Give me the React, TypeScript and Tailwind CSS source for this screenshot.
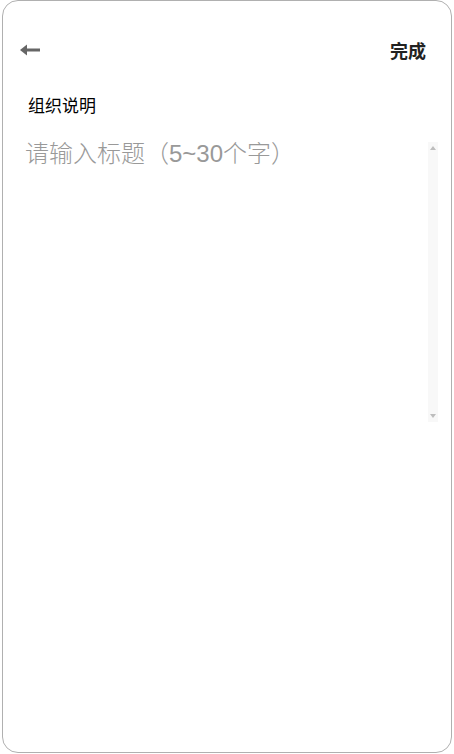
import React from "react";

export default function App() {
  return (
    <div className="w-[454px] h-[754px] bg-white overflow-hidden" style={{ fontFamily: '"Liberation Sans", "Noto Sans CJK SC", sans-serif' }}>
      <div className="ml-[2px] w-[450px] h-[753px] border border-[#b0b0b0] rounded-[16px] flex flex-col">
        <div className="flex items-center justify-between pl-[16px] pr-[25px] pt-[34px] h-[64px]">
          <svg width="24" height="14" viewBox="0 0 24 14">
            <path d="M1 7 L8 1.5 L8 12.5 Z" fill="#666" />
            <rect x="7" y="5.5" width="14" height="3" fill="#666" />
          </svg>
          <span className="text-[18px] font-bold text-[#222] leading-none" style={{ fontFamily: '"Noto Sans CJK SC", sans-serif' }}>完成</span>
        </div>
        <div className="pl-[25px] pt-[28px] text-[17px] text-black leading-[24px]" style={{ fontFamily: '"Noto Sans CJK SC", sans-serif' }}>组织说明</div>
        <div className="flex pl-[22px] pr-[13px] pt-[25px]">
          <textarea
            className="flex-1 h-[280px] resize-none outline-none text-[24px] leading-[24px] font-light text-[#333] placeholder:text-[#999] overflow-hidden p-0 bg-white"
            style={{ fontFamily: '"Liberation Sans", "Noto Sans CJK SC", sans-serif' }}
            placeholder="请输入标题（5~30个字）"
          />
          <div className="w-[10px] h-[280px] bg-[#f8f8f8] flex flex-col items-center justify-between py-[4px]">
            <svg width="6" height="4" viewBox="0 0 6 4">
              <path d="M3 0 L6 4 L0 4 Z" fill="#bdbdbd" />
            </svg>
            <svg width="6" height="4" viewBox="0 0 6 4">
              <path d="M0 0 L6 0 L3 4 Z" fill="#bdbdbd" />
            </svg>
          </div>
        </div>
      </div>
    </div>
  );
}
